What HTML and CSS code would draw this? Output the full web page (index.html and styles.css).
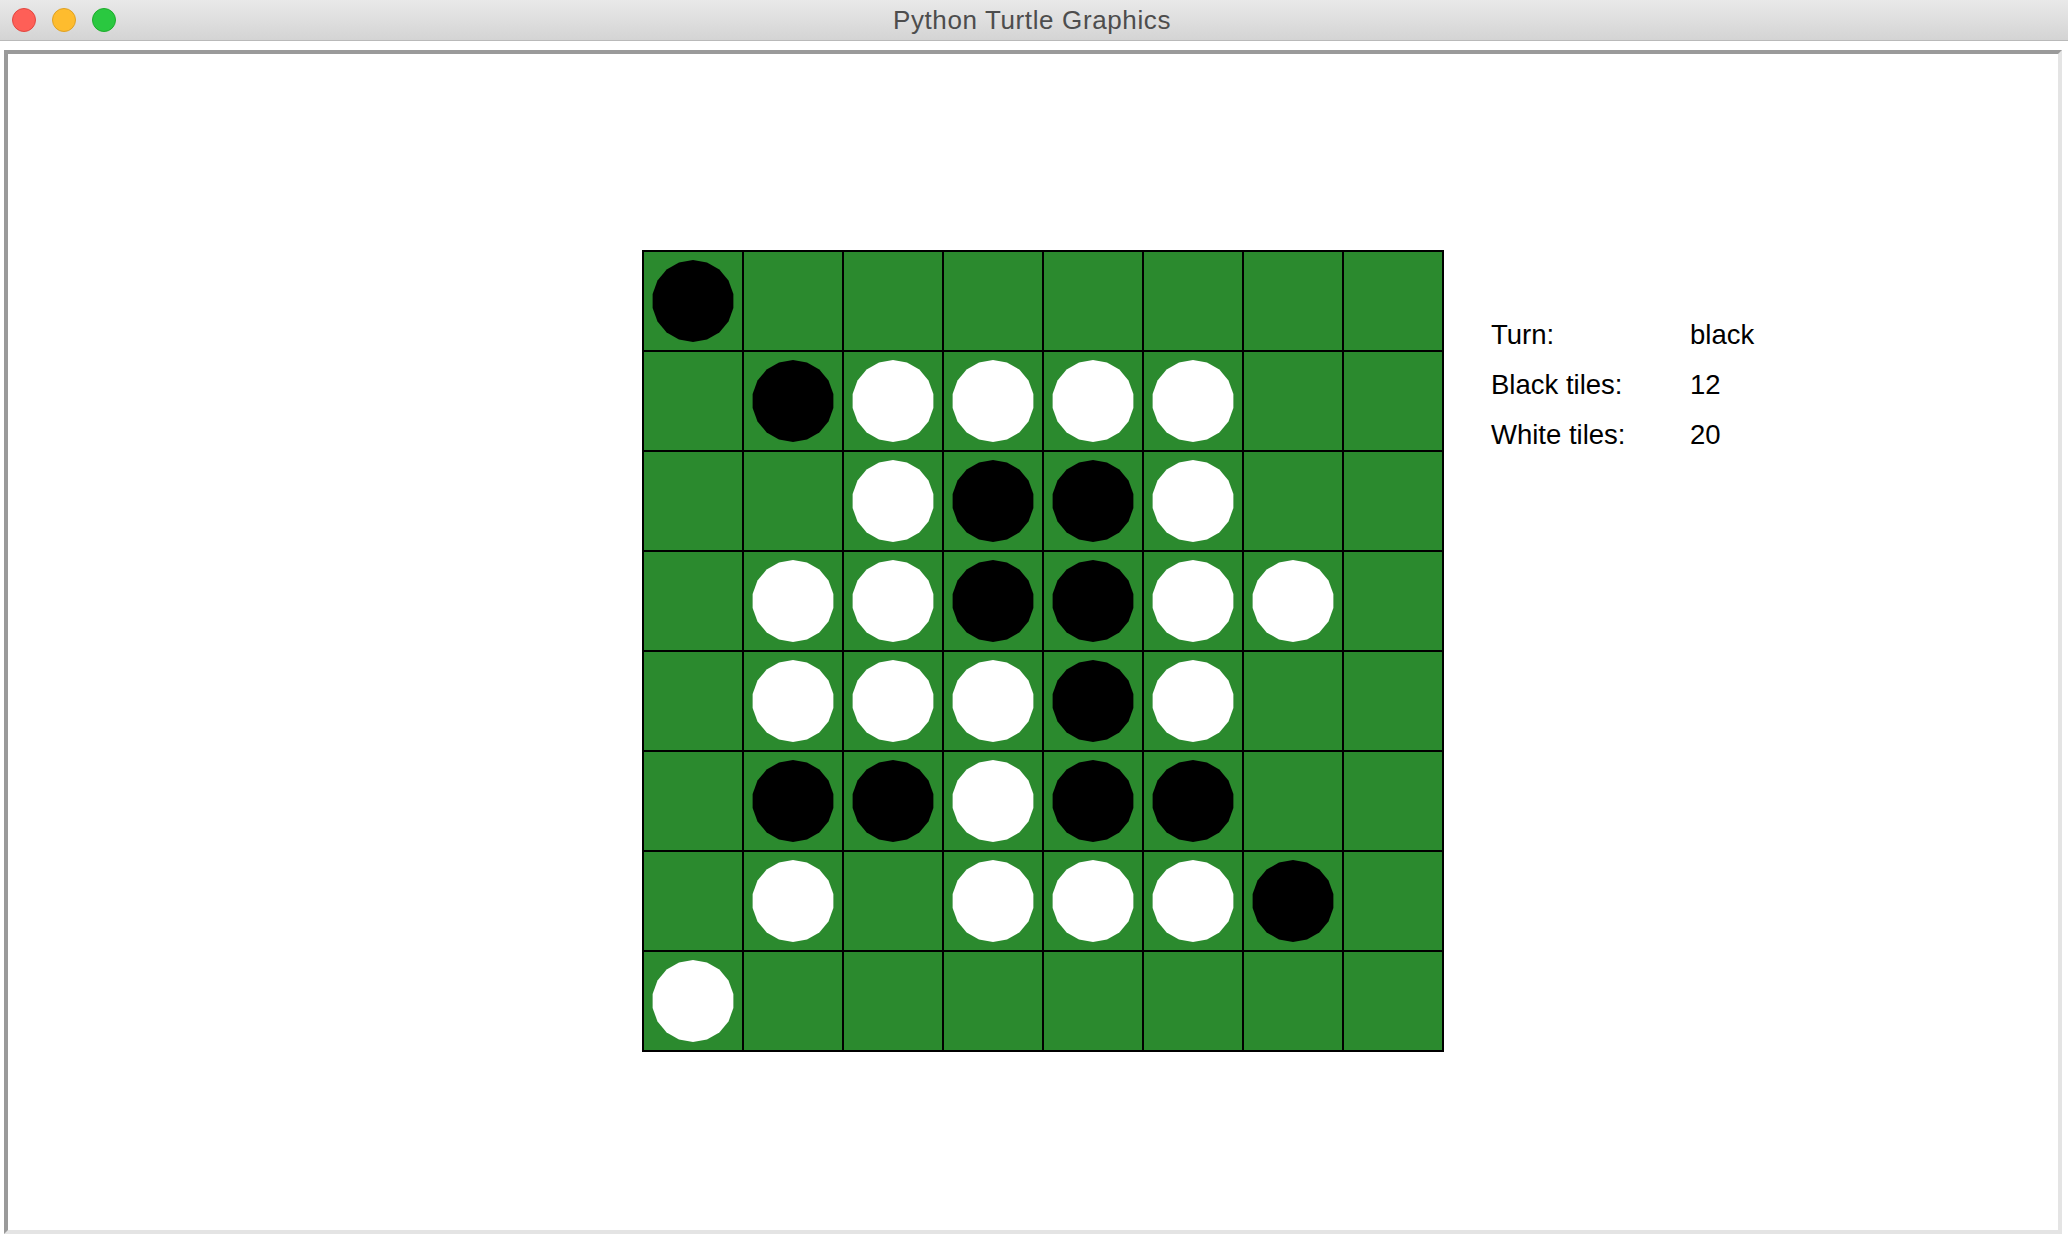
FILE: index.html
```html
<!DOCTYPE html>
<html>
<head>
<meta charset="utf-8">
<title>Python Turtle Graphics</title>
<link rel="stylesheet" href="styles.css">
</head>
<body>
<div class="window">
  <div class="titlebar">
    <div class="lights">
      <span class="light red"></span>
      <span class="light yellow"></span>
      <span class="light green"></span>
    </div>
    <div class="title">Python Turtle Graphics</div>
  </div>
  <div class="body">
    <div class="frame">
      <div class="canvas">
        <div class="board">
          <div class="cell"><div class="disc black"></div></div><div class="cell"></div><div class="cell"></div><div class="cell"></div><div class="cell"></div><div class="cell"></div><div class="cell"></div><div class="cell"></div>
          <div class="cell"></div><div class="cell"><div class="disc black"></div></div><div class="cell"><div class="disc white"></div></div><div class="cell"><div class="disc white"></div></div><div class="cell"><div class="disc white"></div></div><div class="cell"><div class="disc white"></div></div><div class="cell"></div><div class="cell"></div>
          <div class="cell"></div><div class="cell"></div><div class="cell"><div class="disc white"></div></div><div class="cell"><div class="disc black"></div></div><div class="cell"><div class="disc black"></div></div><div class="cell"><div class="disc white"></div></div><div class="cell"></div><div class="cell"></div>
          <div class="cell"></div><div class="cell"><div class="disc white"></div></div><div class="cell"><div class="disc white"></div></div><div class="cell"><div class="disc black"></div></div><div class="cell"><div class="disc black"></div></div><div class="cell"><div class="disc white"></div></div><div class="cell"><div class="disc white"></div></div><div class="cell"></div>
          <div class="cell"></div><div class="cell"><div class="disc white"></div></div><div class="cell"><div class="disc white"></div></div><div class="cell"><div class="disc white"></div></div><div class="cell"><div class="disc black"></div></div><div class="cell"><div class="disc white"></div></div><div class="cell"></div><div class="cell"></div>
          <div class="cell"></div><div class="cell"><div class="disc black"></div></div><div class="cell"><div class="disc black"></div></div><div class="cell"><div class="disc white"></div></div><div class="cell"><div class="disc black"></div></div><div class="cell"><div class="disc black"></div></div><div class="cell"></div><div class="cell"></div>
          <div class="cell"></div><div class="cell"><div class="disc white"></div></div><div class="cell"></div><div class="cell"><div class="disc white"></div></div><div class="cell"><div class="disc white"></div></div><div class="cell"><div class="disc white"></div></div><div class="cell"><div class="disc black"></div></div><div class="cell"></div>
          <div class="cell"><div class="disc white"></div></div><div class="cell"></div><div class="cell"></div><div class="cell"></div><div class="cell"></div><div class="cell"></div><div class="cell"></div><div class="cell"></div>
        </div>
        <div class="info">
          <div class="label">Turn:</div><div class="value">black</div>
          <div class="label">Black tiles:</div><div class="value">12</div>
          <div class="label">White tiles:</div><div class="value">20</div>
        </div>
      </div>
    </div>
  </div>
</div>
</body>
</html>
```

FILE: styles.css
```css
html, body {
  margin: 0;
  padding: 0;
  background: #ffffff;
}

body {
  width: 2068px;
  height: 1242px;
  overflow: hidden;
  font-family: "Liberation Sans", Arial, sans-serif;
}

.window {
  width: 2068px;
  height: 1242px;
  display: flex;
  flex-direction: column;
  background: #ffffff;
}

.titlebar {
  position: relative;
  height: 40px;
  border-bottom: 1px solid #b9b9b9;
  background: linear-gradient(to bottom, #e9e9e9 0%, #d4d4d4 100%);
  display: flex;
  align-items: center;
  justify-content: center;
  flex-shrink: 0;
}

.lights {
  position: absolute;
  left: 12px;
  top: 8px;
  display: flex;
  gap: 16px;
}

.light {
  width: 22px;
  height: 22px;
  border-radius: 50%;
  display: block;
}

.light.red {
  background: #fe5f57;
  border: 1px solid #e2463f;
}

.light.yellow {
  background: #febc2e;
  border: 1px solid #dfa123;
}

.light.green {
  background: #2ac840;
  border: 1px solid #1dad2b;
}

.title {
  font-family: "Liberation Sans", Arial, sans-serif;
  font-size: 26px;
  letter-spacing: 0.62px;
  line-height: 40px;
  color: #4d4d4d;
  padding-right: 4px;
}

.body {
  flex: 1;
  padding: 9px 6px 8px 4px;
  display: flex;
}

.frame {
  flex: 1;
  border-top: 4px solid #9a9a9a;
  border-left: 4px solid #9a9a9a;
  border-right: 4px solid #e4e4e4;
  border-bottom: 4px solid #e4e4e4;
  background: #ffffff;
  display: flex;
}

.canvas {
  flex: 1;
  display: flex;
  align-items: flex-start;
  padding-top: 196px;
  padding-left: 634px;
}

.board {
  display: grid;
  grid-template-columns: repeat(8, 98px);
  grid-template-rows: repeat(8, 98px);
  gap: 2px;
  padding: 2px;
  background: #000000;
}

.cell {
  background: #2b8a2e;
  display: flex;
  align-items: center;
  justify-content: center;
}

.disc {
  width: 82px;
  height: 82px;
  clip-path: polygon(50% 100%, 67.1% 96.98%, 82.14% 88.3%, 93.3% 75%, 99.24% 58.68%, 99.24% 41.32%, 93.3% 25%, 82.14% 11.7%, 67.1% 3.02%, 50% 0%, 32.9% 3.02%, 17.86% 11.7%, 6.7% 25%, 0.76% 41.32%, 0.76% 58.68%, 6.7% 75%, 17.86% 88.3%, 32.9% 96.98%);
}

.disc.black {
  background: #000000;
}

.disc.white {
  background: #ffffff;
}

.info {
  margin-left: 47px;
  margin-top: 60px;
  display: grid;
  grid-template-columns: 199px auto;
  font-family: "Liberation Sans", Arial, sans-serif;
  font-size: 27.5px;
  line-height: 50px;
  color: #000000;
}
```
